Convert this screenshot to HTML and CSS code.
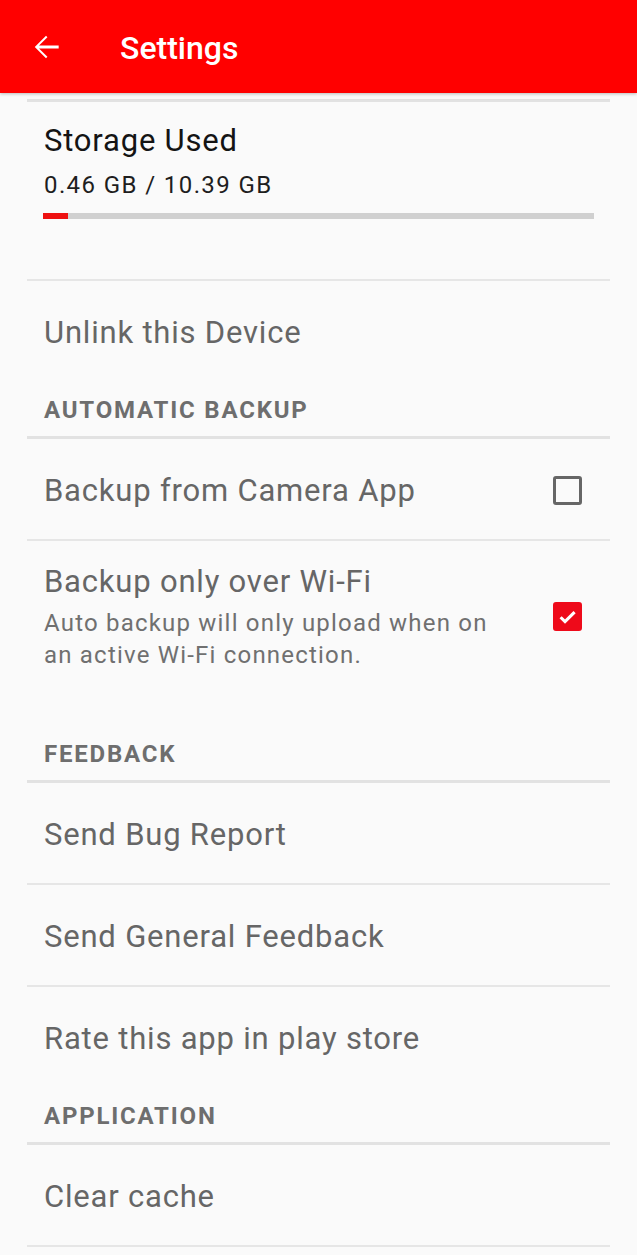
FILE: index.html
```html
<!DOCTYPE html>
<html>
<head>
<meta charset="utf-8">
<link rel="stylesheet" href="styles.css">
</head>
<body>
<header class="appbar">
  <svg class="back" width="38" height="38" viewBox="0 0 24 24"><path d="M20 11.1H7.6l5.3-5.3L12 4.9 4.9 12l7.1 7.1.9-.9-5.3-5.3H20v-1.8z" fill="#fff"/></svg>
  <span class="title">Settings</span>
</header>
<main class="list">
  <div class="cat-line"></div>
  <section class="storage">
    <div class="storage-title">Storage Used</div>
    <div class="storage-sub">0.46 GB / 10.39 GB</div>
    <div class="bar"><div class="fill" style="width:4.5%"></div></div>
  </section>
  <div class="item-line"></div>
  <div class="item">Unlink this Device</div>

  <div class="cat">AUTOMATIC BACKUP</div>
  <div class="cat-line"></div>
  <div class="item row">
    <span>Backup from Camera App</span>
    <span class="cb"></span>
  </div>
  <div class="item-line"></div>
  <div class="item row tall">
    <div class="texts">
      <div class="t">Backup only over Wi-Fi</div>
      <div class="summary">Auto backup will only upload when on an active Wi-Fi connection.</div>
    </div>
    <span class="cb checked"><svg width="24" height="24" viewBox="0 0 24 24"><path d="M4.8 12.3l4.6 4.6L19.4 6.9" fill="none" stroke="#fff" stroke-width="3.2"/></svg></span>
  </div>

  <div class="cat">FEEDBACK</div>
  <div class="cat-line"></div>
  <div class="item">Send Bug Report</div>
  <div class="item-line"></div>
  <div class="item">Send General Feedback</div>
  <div class="item-line"></div>
  <div class="item">Rate this app in play store</div>

  <div class="cat">APPLICATION</div>
  <div class="cat-line"></div>
  <div class="item">Clear cache</div>
  <div class="item-line"></div>
</main>
</body>
</html>
```
FILE: styles.css
```css
* { box-sizing: border-box; }
html, body { margin: 0; padding: 0; }
body {
  background: #fafafa;
  font-family: Roboto, "Noto Sans", sans-serif;
  width: 637px;
  height: 1255px;
  overflow: hidden;
}
.appbar {
  height: 93px;
  background: #ff0000;
  display: flex;
  align-items: center;
  padding-left: 27px;
  box-shadow: 0 1px 3px rgba(0,0,0,0.25);
  position: relative;
}
.back { display: block; }
.title {
  color: #fff;
  font-size: 32px;
  font-weight: 500;
  margin-left: 55px;
  margin-top: 2px;
}
.list {
  margin: 0 27px;
  padding-top: 6px;
}
.cat-line { height: 3px; background: #e2e2e2; }
.item-line { height: 2px; background: #e6e6e6; }
.storage {
  height: 177px;
  padding: 20px 16px 0 17px;
}
.storage-title {
  font-size: 31px;
  line-height: 38px;
  letter-spacing: 0.8px;
  color: #141414;
}
.storage-sub {
  font-size: 24px;
  line-height: 30px;
  letter-spacing: 1.4px;
  color: #1e1e1e;
  margin-top: 10px;
}
.bar {
  margin-top: 13px;
  margin-left: -1px;
  height: 6px;
  background: #d0d0d0;
}
.fill { height: 100%; background: #ee1111; }
.item {
  height: 100px;
  padding: 3px 17px 0;
  display: flex;
  align-items: center;
  font-size: 31px;
  letter-spacing: 0.8px;
  color: #666;
}
.row { justify-content: space-between; padding-right: 28px; }
.tall { height: 184px; padding-bottom: 36px; }
.texts { width: 462px; }
.t { font-size: 31px; line-height: 38px; color: #666; }
.summary {
  font-size: 24px;
  line-height: 32px;
  letter-spacing: 1.2px;
  color: #707070;
  margin-top: 6px;
}
.cb {
  width: 29px;
  height: 29px;
  border: 3px solid #666;
  border-radius: 3px;
  display: flex;
  align-items: center;
  justify-content: center;
  flex: none;
}
.cb.checked { background: #ee0a1a; border-color: #ee0a1a; }
.cat {
  height: 55px;
  padding: 2px 17px 0;
  display: flex;
  align-items: center;
  font-size: 24px;
  font-weight: 700;
  letter-spacing: 1.8px;
  color: #6e6e6e;
}
```
